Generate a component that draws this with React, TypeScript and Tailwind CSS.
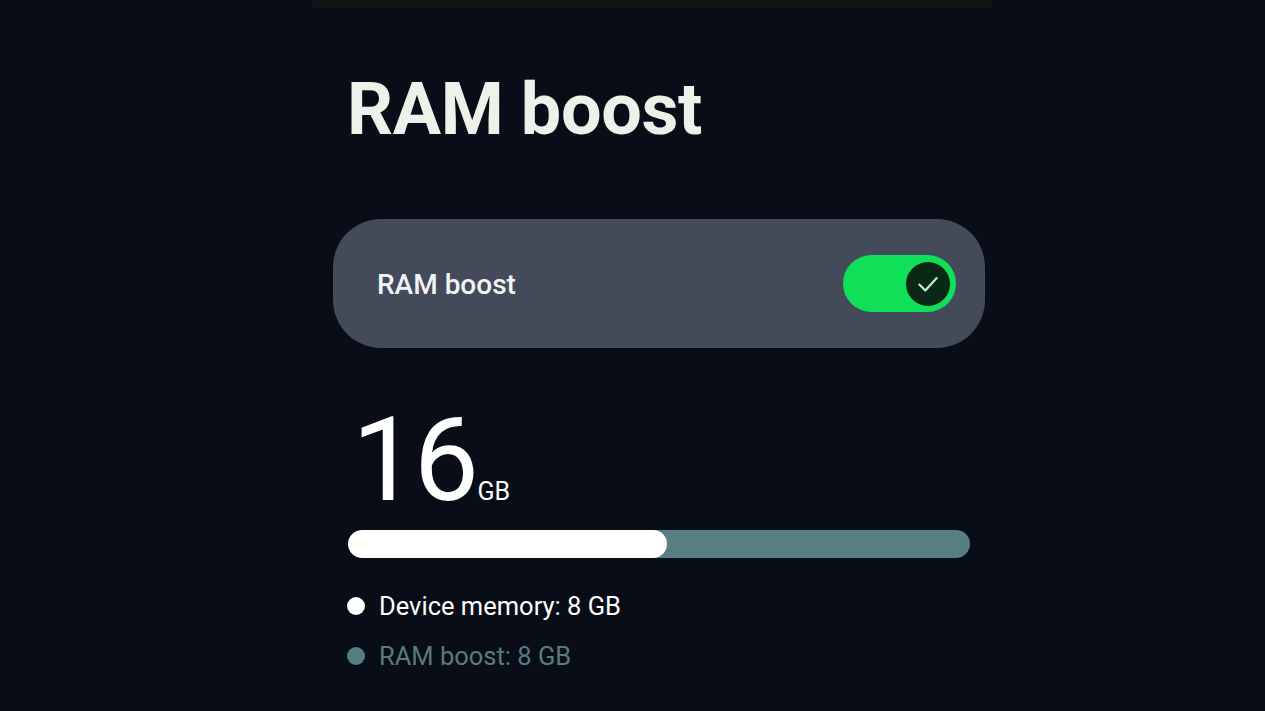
import React from "react";

export default function App() {
  return (
    <div
      className="w-[1265px] h-[711px] bg-[#080d18] overflow-hidden flex flex-col"
      style={{ fontFamily: "Roboto, 'Liberation Sans', sans-serif" }}
    >
      <div className="ml-[312px] w-[680px] h-[8px] bg-[#0f1311] shrink-0" />
      <div className="ml-[333px] w-[652px] flex flex-col">
        <h1 className="text-[72px] leading-none font-bold text-[#eef0ea] ml-[14px] mt-[66px] tracking-[-0.4px]">
          RAM boost
        </h1>
        <div className="mt-[73px] h-[129px] rounded-[48px] bg-[#434a59] flex items-center justify-between pl-[44px] pr-[29px]">
          <span className="text-[28px] font-medium text-[#f2f3f5] mt-[3px]">RAM boost</span>
          <div className="w-[113px] h-[57px] rounded-full bg-[#10e057] flex items-center justify-end pr-[6px]">
            <div className="w-[44px] h-[44px] rounded-full bg-[#0b2716] flex items-center justify-center">
              <svg width="26" height="26" viewBox="0 0 24 24" fill="none" stroke="#b9f5c9" strokeWidth="2" strokeLinecap="round" strokeLinejoin="round">
                <path d="M4 12.5 L9.5 18 L20 6.5" />
              </svg>
            </div>
          </div>
        </div>
        <div className="mt-[62px] ml-[19px] flex items-end">
          <span className="text-[116px] leading-[100px] font-normal text-white tracking-[-3.5px]">16</span>
          <span className="text-[25px] leading-none text-white ml-[2px] mb-[6px]">GB</span>
        </div>
        <div className="mt-[20px] ml-[15px] w-[622px] h-[28px] rounded-full bg-[#577e80] overflow-hidden flex">
          <div className="w-[319px] h-full rounded-full bg-white" />
        </div>
        <div className="mt-[29px] ml-[14px] flex items-center gap-[14px]">
          <div className="w-[18px] h-[18px] rounded-full bg-white" />
          <span className="text-[25.5px] text-white">Device memory: 8 GB</span>
        </div>
        <div className="mt-[12px] ml-[14px] flex items-center gap-[14px]">
          <div className="w-[18px] h-[18px] rounded-full bg-[#577e80]" />
          <span className="text-[25.5px] text-[#5a7b7d]">RAM boost: 8 GB</span>
        </div>
      </div>
    </div>
  );
}
